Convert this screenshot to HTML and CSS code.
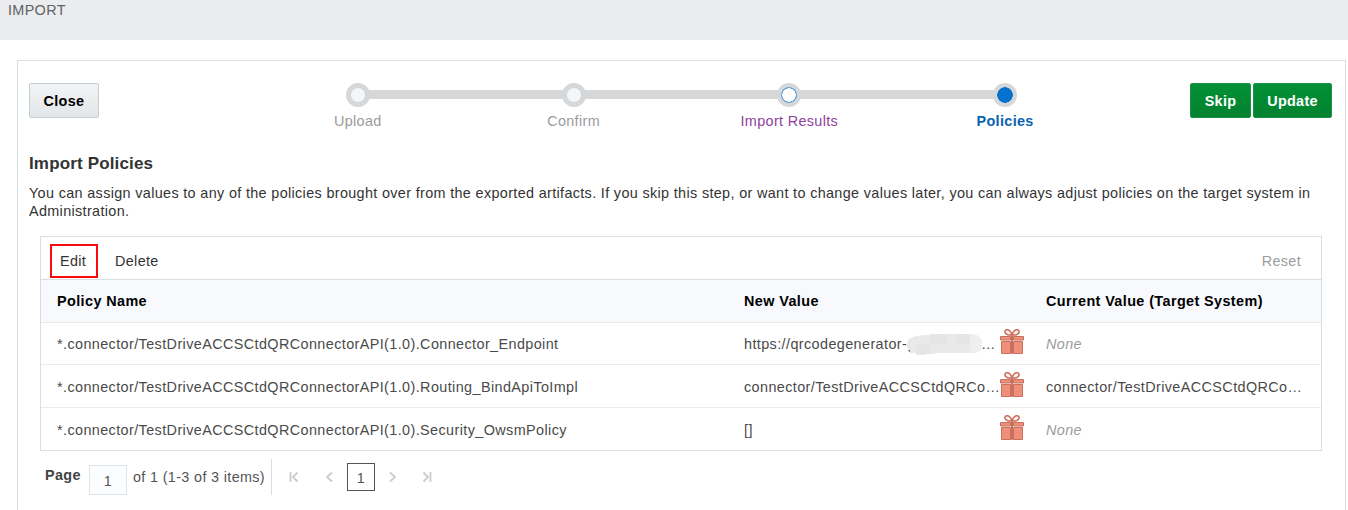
FILE: index.html
```
<!DOCTYPE html>
<html lang="en">
<head>
<meta charset="utf-8">
<title>Import</title>
<link rel="stylesheet" href="styles.css">
</head>
<body>
<svg width="0" height="0" class="defs">
  <symbol id="gift" viewBox="0 0 24 27">
    <g fill="#f0907a" stroke="#c8705f" stroke-width="1">
      <path d="M.5 8.500h10v3.500H.5zM13.500 8.500h10v3.500h-10zM1.500 13.500h9v12h-9zM13.500 13.500h9v12h-9z"/>
      <path d="M11.500 7.500h1v18h-1z" fill="#e78371"/>
    </g>
    <path d="M12 6.600C9.500 7.600 5.200 6.900 4.900 3.900 4.800.8 9.700.4 12 6.600M12 6.600C14.500 7.600 18.800 6.900 19.100 3.900 19.200.8 14.300.4 12 6.600" fill="#fdf3ee" stroke="#cc6e5c" stroke-width="1.600"/>
  </symbol>
</svg>
<header class="page-header">IMPORT</header>
<main class="panel">
  <div class="top">
    <button class="btn close">Close</button>
    <ol class="train">
      <li class="step"><span class="dot"></span><span class="label">Upload</span></li>
      <li class="step"><span class="dot"></span><span class="label">Confirm</span></li>
      <li class="step visited"><span class="dot"></span><span class="label">Import Results</span></li>
      <li class="step current"><span class="dot"></span><span class="label">Policies</span></li>
    </ol>
    <div class="actions">
      <button class="btn primary skip">Skip</button>
      <button class="btn primary update">Update</button>
    </div>
  </div>
  <h1 class="title">Import Policies</h1>
  <p class="description">You can assign values to any of the policies brought over from the exported artifacts. If you skip this step, or want to change values later, you can always adjust policies on the target system in<br>Administration.</p>
  <section class="table">
    <div class="toolbar">
      <span class="edit">Edit</span><span class="delete">Delete</span><span class="reset">Reset</span>
    </div>
    <div class="row head"><div>Policy Name</div><div>New Value</div><div>Current Value (Target System)</div></div>
    <div class="row">
      <div>*.connector/TestDriveACCSCtdQRConnectorAPI(1.0).Connector_Endpoint</div>
      <div class="value"><span class="text url">https://qrcodegenerator-g<svg class="mask" width="76" height="23" viewBox="0 0 76 23"><path d="M1 12C1 4 10 2 24 2L25 1H64Q76 1 76 11T64 20H29V21H20V22H10V20H4V17H2z" fill="#e9e9ea"/><path d="M24 1h17v10H24zM50 1h14v10H50zM10 11h14v10H10z" fill="#e5e5e6"/><path d="M64 1Q76 1 76 11T64 20z" fill="#efeff0"/></svg><span class="dots">…</span></span><svg class="gift"><use href="#gift"/></svg></div>
      <div class="none">None</div>
    </div>
    <div class="row">
      <div>*.connector/TestDriveACCSCtdQRConnectorAPI(1.0).Routing_BindApiToImpl</div>
      <div class="value"><span class="text">connector/TestDriveACCSCtdQRCo…</span><svg class="gift"><use href="#gift"/></svg></div>
      <div>connector/TestDriveACCSCtdQRCo…</div>
    </div>
    <div class="row">
      <div>*.connector/TestDriveACCSCtdQRConnectorAPI(1.0).Security_OwsmPolicy</div>
      <div class="value"><span class="text">[]</span><svg class="gift"><use href="#gift"/></svg></div>
      <div class="none">None</div>
    </div>
  </section>
  <nav class="pager">
    <b class="page-label">Page</b>
    <span class="page-input">1</span>
    <span class="range">of 1 (1-3 of 3 items)</span>
    <svg class="nav first" width="10" height="12"><path d="M1.500 1v10M8.500 1.500L4 6l4.500 4.500"/></svg>
    <svg class="nav prev" width="10" height="12"><path d="M7 1.500L2 6l5 4.500"/></svg>
    <span class="page-current">1</span>
    <svg class="nav next" width="10" height="12"><path d="M3 1.500L8 6l-5 4.500"/></svg>
    <svg class="nav last" width="10" height="12"><path d="M8.500 1v10M1.500 1.500L6 6l-4.500 4.500"/></svg>
  </nav>
</main>
</body>
</html>
```
FILE: styles.css
```
* { box-sizing: border-box; }
body {
  margin: 0;
  height: 510px;
  overflow: hidden;
  background: #fff;
  color: #333;
  font: 14.4px/18px "Liberation Sans", Arial, sans-serif;
  letter-spacing: .345px;
}
.defs { position: absolute; }
.page-header {
  height: 40px;
  padding: 1px 8px;
  background: #ebeced;
  color: #606366;
}
.panel {
  width: 1329px;
  height: 470px;
  margin: 20px 0 0 17px;
  border: 1px solid #d6dfe6;
}
.top {
  display: flex;
  height: 92px;
  padding: 22px 13px 0 11px;
}
.btn {
  height: 35px;
  padding: 1px 0 0;
  border: 1px solid #c4ced7;
  border-radius: 2px;
  font: bold 14.4px/18px "Liberation Sans", Arial, sans-serif;
  letter-spacing: .3px;
}
.close {
  width: 70px;
  background: linear-gradient(#f3f4f5, #e2e6e8);
  color: #000;
}
.train {
  display: flex;
  width: 864px;
  margin: 0 0 0 151px;
  padding: 0;
  list-style: none;
}
.step {
  flex: 1;
  display: flex;
  flex-direction: column;
  align-items: center;
  color: #9b9b9b;
  background: linear-gradient(#d6d7d8, #d6d7d8) 0 7px / 100% 9px no-repeat;
}
.step:first-child { background-position: 108px 7px; }
.step:last-child { background-size: 50% 9px; }
.dot {
  width: 24px;
  height: 24px;
  border: 5px solid #d6d7d8;
  border-radius: 50%;
  background: #f4f6f8;
}
.label { margin-top: 5px; }
.visited { color: #8f3f9c; }
.visited .dot { background: radial-gradient(circle, #fff 6.500px, #4595d8 7px, #6ba9dc 7.600px, #d6d7d8 8.200px); border: 0; }
.current { color: #0a63b0; font-weight: bold; }
.current .dot { background: radial-gradient(circle, #0572ce 7.500px, #d6d7d8 8px); border: 0; }
.actions {
  display: flex;
  gap: 2px;
  margin-left: 77px;
}
.primary {
  background: linear-gradient(#029036, #04822f);
  border-color: #1a9146;
  color: #fff;
}
.skip { width: 61px; }
.update { width: 79px; }
.title {
  margin: 1px 0 0 11px;
  font-size: 17px;
  line-height: 20px;
  letter-spacing: .15px;
}
.description {
  margin: 10px 0 0 11px;
  white-space: nowrap;
}
.table {
  width: 1282px;
  height: 215px;
  margin: 16px 0 0 22px;
  border: 1px solid #d6dfe6;
}
.toolbar {
  display: flex;
  align-items: center;
  height: 43px;
  padding: 5px 20px 0 9px;
  border-bottom: 1px solid #d6dfe6;
}
.edit {
  width: 48px;
  height: 34px;
  padding: 6px 0 0 8px;
  border: 2px solid #fa0b0b;
}
.delete { margin-left: 17px; }
.reset { margin-left: auto; color: #9b9b9b; }
.row {
  display: grid;
  grid-template-columns: 687px 302px 1fr;
  align-items: center;
  height: 42.500px;
  padding: 2px 0 0 16px;
  border-bottom: 1px solid #e6ebee;
  color: #4a4a4a;
  letter-spacing: .4px;
  white-space: nowrap;
}
.row:last-child { border: 0; }
.head {
  padding-top: 0;
  background: #f7f9fd;
  color: #000;
  font-weight: bold;
}
.value { display: flex; align-items: center; }
.text { position: relative; width: 256px; }
.mask { position: absolute; left: 162px; top: -2px; }
.dots { position: absolute; left: 237px; }
.gift { flex: none; width: 24px; height: 27px; margin-top: -5px; }
.none { color: #9b9b9b; font-style: italic; }
.pager {
  display: flex;
  align-items: center;
  height: 37px;
  margin: 7px 0 0 27px;
  color: #555;
}
.page-label { width: 44px; margin-top: -3px; color: #444; }
.page-input {
  width: 38px;
  height: 30px;
  margin-top: 7px;
  padding-top: 6px;
  border: 1px solid #dfe4e7;
  background: #fcfdfe;
  text-align: center;
}
.range {
  width: 145px;
  height: 36px;
  padding: 9px 0 0 6px;
  border-right: 1px solid #d6dfe6;
  white-space: nowrap;
}
.page-current {
  width: 28px;
  height: 28px;
  padding-top: 5px;
  border: 1px solid #555;
  text-align: center;
}
.nav { fill: none; stroke: #ccc; stroke-width: 1.800; }
.first { margin-left: 17px; }
.prev { margin: 0 12px 0 26px; }
.next { margin-left: 12px; }
.last { margin-left: 25px; }
```
